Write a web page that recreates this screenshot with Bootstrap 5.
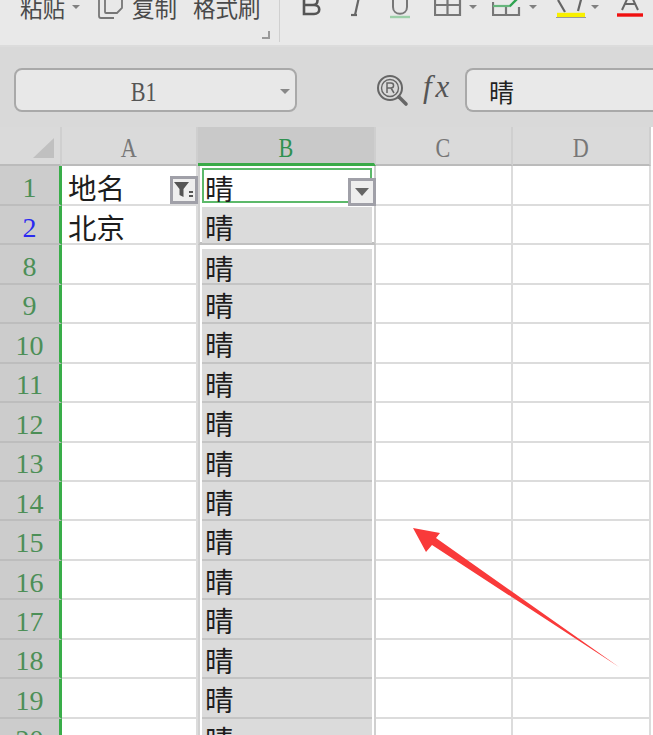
<!DOCTYPE html>
<html lang="zh"><head><meta charset="utf-8">
<link href="https://cdn.jsdelivr.net/npm/bootstrap@5.3.0/dist/css/bootstrap.min.css" rel="stylesheet">
<style>
html,body{height:735px;overflow:hidden;background:#fff}
body{font-family:"Noto Sans CJK SC","Liberation Sans",sans-serif;color:#222}
.page{position:relative;height:735px;overflow:hidden}
.tbar{height:47px;background:#e9e9e9;overflow:hidden;border-bottom:2px solid #dcdcdc;position:relative}
.tbar-in{margin-top:-8px;height:30px;padding-left:20px;font-size:22.5px;line-height:30px;color:#4a4a4a}
.sep-v{width:1px;height:50px;background:#d0d0d0;margin-left:18px;align-self:flex-start}
.caret-s{width:0;height:0;border-left:4px solid transparent;border-right:4px solid transparent;border-top:4px solid #808080;display:inline-block}
.corner-i{position:absolute;left:261px;top:30px}
.fbar{height:80px;background:#d9d9d9;padding:21px 0 0 14px}
.namebox{width:283px;height:44px;background:#e8e8e8;border:2px solid #a9a9a9;border-radius:8px;position:relative;font-family:"Liberation Serif",serif;font-size:27px;color:#555;line-height:44px;text-align:center;padding-right:24px}
.namebox .caret-s{position:absolute;right:5px;top:19px;border-left-width:5px;border-right-width:5px;border-top-width:5px;border-top-color:#888}
.narrow{display:inline-block;transform:scaleX(.82)}
.fxinput{flex:1;height:44px;background:#e9e9e9;border:2px solid #a9a9a9;border-right:0;border-radius:8px 0 0 8px;font-size:25px;line-height:42px;padding-left:22px;color:#222}
.fxlabel{font-family:"Liberation Serif",serif;font-style:italic;font-size:31px;letter-spacing:4px;color:#555;line-height:38px;width:42px;margin-left:13px}
.sheet{display:grid;grid-template-columns:62px 136px 178px 137px 138px;grid-auto-rows:39.45px}
.headrow{grid-column:1/-1;display:grid;grid-template-columns:62px 136px 178px 137px 138px;height:39px}
.chead{height:39px;background:#dadada;border-right:2px solid #cfcfcf;border-bottom:2px solid #bbb;display:flex;align-items:center;justify-content:center;padding-top:6px;font-family:"Liberation Serif",serif;font-size:27px;color:#777}
.corner-c{position:relative}
.corner-c svg{position:absolute;left:33px;top:11px}
.chead.on{background:#c9c9c9;color:#2f9150;border-bottom:3px solid #3aaa48}
.rh{background:#cccccc;border-right:3px solid #39ad49;border-bottom:2px solid #bdbdbd;display:flex;align-items:center;justify-content:center;padding-top:6px;font-family:"Liberation Serif",serif;font-size:28px;color:#4c8f57}
.rh.blue{color:#2a2af0}
.c{background:#fff;border-right:2px solid #dcdcdc;border-bottom:2px solid #dcdcdc;font-size:28.5px;line-height:41px;padding-left:6px;color:#1d1d1d;position:relative;white-space:nowrap}
.b{border-right:2px solid #d0d0d0;border-left:2px solid #d0d0d0;padding:0 2px;border-bottom:0}
.b>span{display:block;height:100%;background:#dbdbdb;border-bottom:2px solid #c4c4c4;padding-left:3px;line-height:39px}
.b.first>span{background:#fff;border:2px solid #5cb96a;height:35px;margin-top:2px;padding-left:1px;line-height:35px}
.b.sec>span{border-bottom:0;height:36px;margin-top:1px;line-height:40px}
.b.sec{border-bottom:3px solid #c0c0c0}
.b.third>span{margin-top:4px;height:36px;line-height:37px}
.fbtn{position:absolute;right:-2px;bottom:0;width:28px;height:28px;background:#eee;border:3px solid #a0a0a8;display:flex;align-items:center;justify-content:center}
.arrow-ov{position:absolute;left:0;top:0;pointer-events:none}
</style></head><body>
<div class="page">
<div class="tbar">
 <div class="tbar-in d-flex align-items-center">
  <span>粘贴</span><span class="caret-s" style="margin-left:7px"></span>
  <svg style="margin-left:17px" width="28" height="30" viewBox="0 0 28 30" fill="none" stroke="#777" stroke-width="1.8"><path d="M2 6v18q0 2 2 2h13"/><path d="M8 6v14q0 1 1 1h11l5-5V6"/></svg>
  <span style="margin-left:7px">复制</span>
  <span style="margin-left:16px">格式刷</span>
  <div class="sep-v"></div>
  <svg style="margin-left:22px" width="20" height="30" viewBox="0 0 20 30" fill="none" stroke="#555" stroke-width="2.6"><path d="M2 4v18h10c7 0 7-9 0-9H2M2 13h9c6 0 6-9 0-9"/></svg>
  <svg style="margin-left:27px" width="14" height="30" viewBox="0 0 14 30" fill="none" stroke="#666" stroke-width="2.2"><path d="M10 5 6 23"/><path d="M2 23h6"/></svg>
  <svg style="margin-left:25px" width="24" height="30" viewBox="0 0 24 30" fill="none"><path d="M5 5v10c0 9 14 9 14 0V5" stroke="#777" stroke-width="2"/><path d="M2 25h20" stroke="#9ccfa8" stroke-width="2.4"/></svg>
  <svg style="margin-left:22px" width="28" height="30" viewBox="0 0 28 30" fill="none" stroke="#777" stroke-width="2.2"><path d="M1 3h25v20H1zM13.5 3v20M1 13h25"/></svg>
  <span class="caret-s" style="margin-left:7px"></span>
  <svg style="margin-left:15px" width="30" height="30" viewBox="0 0 30 30" fill="none" stroke="#777" stroke-width="2.2"><path d="M1 10v13h26V15M14 14v9"/><path d="M1 14h18" stroke="#66b67c"/><path d="m18 14 9-9" stroke="#2ea34f" stroke-width="2.4"/></svg>
  <span class="caret-s" style="margin-left:7px"></span>
  <svg style="margin-left:18px" width="32" height="30" viewBox="0 0 32 30" fill="none"><path d="m3 8 7 12M27 4l-4 15" stroke="#666" stroke-width="2.2"/><path d="M2 23h28" stroke="#f8f000" stroke-width="4.4"/><path d="M1 25.5h30" stroke="#999"/></svg>
  <span class="caret-s" style="margin-left:4px"></span>
  <svg style="margin-left:17px" width="28" height="30" viewBox="0 0 28 30" fill="none"><path d="m6 18 8-17 8 17M9 12h10" stroke="#666" stroke-width="2"/><path d="M1 23h26" stroke="#f01010" stroke-width="3.4"/></svg>
 </div>
 <svg class="corner-i" width="9" height="9" viewBox="0 0 9 9" fill="none" stroke="#999" stroke-width="2"><path d="M8 1v7H1"/></svg>
</div>
<div class="fbar d-flex align-items-start">
 <div class="namebox"><span class="narrow">B1</span><span class="caret-s"></span></div>
 <svg style="margin-left:79px;margin-top:6px" width="34" height="34" viewBox="0 0 34 34" fill="none" stroke="#666" stroke-width="2"><circle cx="14" cy="14" r="12"/><circle cx="14" cy="14" r="8.5" stroke-width="1.4"/><path d="M11 19V9h4c3.4 0 3.4 5 0 5h-4M15 14l3 5" stroke-width="1.5"/><path d="m23 23 7 7" stroke-width="3.6" stroke-linecap="round"/></svg>
 <div class="fxlabel">fx</div>
 <div class="fxinput">晴</div>
</div>
<div class="sheet">
 <div class="headrow">
  <div class="chead corner-c"><svg width="22" height="20" viewBox="0 0 22 20"><path d="M21 0v20H0z" fill="#c0c0c0"/></svg></div>
  <div class="chead"><span class="narrow">A</span></div><div class="chead on"><span class="narrow">B</span></div><div class="chead"><span class="narrow">C</span></div><div class="chead"><span class="narrow">D</span></div>
 </div>
 <div class="rh">1</div><div class="c">地名<div class="fbtn"><svg width="20" height="19" viewBox="0 0 20 19"><path d="M0 2h15L9.5 9v8l-4-2V9z" fill="#555"/><path d="M15 12h4M15 16h4" stroke="#555" stroke-width="2"/></svg></div></div><div class="c b first"><span>晴</span><div class="fbtn"><svg width="14" height="8" viewBox="0 0 14 8"><path d="M0 0h14L7 8z" fill="#666"/></svg></div></div><div class="c"></div><div class="c"></div>
 <div class="rh blue">2</div><div class="c">北京</div><div class="c b sec"><span>晴</span></div><div class="c"></div><div class="c"></div>
 <div class="rh">8</div><div class="c"></div><div class="c b third"><span>晴</span></div><div class="c"></div><div class="c"></div>
 <div class="rh">9</div><div class="c"></div><div class="c b"><span>晴</span></div><div class="c"></div><div class="c"></div>
 <div class="rh">10</div><div class="c"></div><div class="c b"><span>晴</span></div><div class="c"></div><div class="c"></div>
 <div class="rh">11</div><div class="c"></div><div class="c b"><span>晴</span></div><div class="c"></div><div class="c"></div>
 <div class="rh">12</div><div class="c"></div><div class="c b"><span>晴</span></div><div class="c"></div><div class="c"></div>
 <div class="rh">13</div><div class="c"></div><div class="c b"><span>晴</span></div><div class="c"></div><div class="c"></div>
 <div class="rh">14</div><div class="c"></div><div class="c b"><span>晴</span></div><div class="c"></div><div class="c"></div>
 <div class="rh">15</div><div class="c"></div><div class="c b"><span>晴</span></div><div class="c"></div><div class="c"></div>
 <div class="rh">16</div><div class="c"></div><div class="c b"><span>晴</span></div><div class="c"></div><div class="c"></div>
 <div class="rh">17</div><div class="c"></div><div class="c b"><span>晴</span></div><div class="c"></div><div class="c"></div>
 <div class="rh">18</div><div class="c"></div><div class="c b"><span>晴</span></div><div class="c"></div><div class="c"></div>
 <div class="rh">19</div><div class="c"></div><div class="c b"><span>晴</span></div><div class="c"></div><div class="c"></div>
 <div class="rh">20</div><div class="c"></div><div class="c b"><span>晴</span></div><div class="c"></div><div class="c"></div>
</div>
<svg class="arrow-ov" width="653" height="735" viewBox="0 0 653 735"><path d="M413 528 440 533 436 538 619 667 432 545 426 552z" fill="#f93a3a"/></svg>
</div>
<script src="https://cdn.jsdelivr.net/npm/bootstrap@5.3.0/dist/js/bootstrap.bundle.min.js"></script>
</body></html>
